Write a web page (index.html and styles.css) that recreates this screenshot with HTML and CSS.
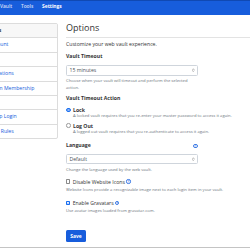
FILE: index.html
```html
<!DOCTYPE html>
<html lang="en">
<head>
<meta charset="utf-8">
<title>Options</title>
<link rel="stylesheet" href="styles.css">
</head>
<body>
<nav class="navbar">
  <a class="nav-link first">My Vault</a>
  <a class="nav-link">Tools</a>
  <a class="nav-link active">Settings</a>
</nav>
<div class="page">
  <aside class="sidebar">
    <div class="card-header">Settings</div>
    <a class="item">My Account</a>
    <a class="item active">Options</a>
    <a class="item">Organizations</a>
    <a class="item">Premium Membership</a>
    <a class="item">Billing</a>
    <a class="item">Two-step Login</a>
    <a class="item">Domain Rules</a>
  </aside>
  <main class="main">
    <div class="page-header"><h1>Options</h1></div>
    <p class="lead">Customize your web vault experience.</p>

    <div class="group g-timeout">
      <div class="label">Vault Timeout</div>
      <div class="select">
        <span>15 minutes</span>
        <svg class="chev" viewBox="0 0 6 10"><path d="M1 4 L3 2 L5 4 M1 6 L3 8 L5 6"/></svg>
      </div>
      <p class="help">Choose when your vault will timeout and perform the selected action.</p>
    </div>

    <div class="label l-action">Vault Timeout Action</div>
    <div class="radio r-lock">
      <div class="row"><span class="dot on"></span><strong>Lock</strong></div>
      <p class="desc">A locked vault requires that you re-enter your master password to access it again.</p>
    </div>
    <div class="radio r-logout">
      <div class="row"><span class="dot"></span><strong>Log Out</strong></div>
      <p class="desc">A logged out vault requires that you re-authenticate to access it again.</p>
    </div>

    <div class="group g-lang">
      <div class="label label-row"><span>Language</span><span class="q">?</span></div>
      <div class="select">
        <span>Default</span>
        <svg class="chev" viewBox="0 0 6 10"><path d="M1 4 L3 2 L5 4 M1 6 L3 8 L5 6"/></svg>
      </div>
      <p class="help">Change the language used by the web vault.</p>
    </div>

    <div class="check c-icons">
      <div class="row"><span class="box"></span><span>Disable Website Icons</span><span class="q">?</span></div>
      <p class="desc">Website Icons provide a recognizable image next to each login item in your vault.</p>
    </div>
    <div class="check c-grav">
      <div class="row"><span class="box on"><svg viewBox="0 0 10 10"><path d="M2 5.2 L4.2 7.4 L8.2 2.8"/></svg></span><span>Enable Gravatars</span><span class="q">?</span></div>
      <p class="desc">Use avatar images loaded from gravatar.com.</p>
    </div>

    <button class="btn">Save</button>
  </main>
</div>
<footer class="footer"></footer>
</body>
</html>
```

FILE: styles.css
```css
* { box-sizing: border-box; }
html, body { margin: 0; padding: 0; }
body {
  width: 250px;
  height: 250px;
  overflow: hidden;
  background: #fff;
  color: #333;
  font-family: "Open Sans", "Noto Sans", sans-serif;
  font-size: 5.15px;
}

/* navbar */
.navbar {
  display: flex;
  gap: 8.7px;
  height: 15px;
  background: #175ddc;
  border-top: 1px solid #1049b3;
  padding-top: 1.5px;
  line-height: 6px;
}
.nav-link {
  font-size: 4.9px;
  font-weight: 600;
  color: rgba(255, 255, 255, 0.8);
  white-space: nowrap;
}
.nav-link.first { margin-left: -8.5px; }
.nav-link.active { color: #fff; font-weight: 700; }

/* page */
.page {
  display: flex;
  gap: 8px;
  padding-top: 7px;
}

.sidebar {
  flex: 0 0 84.5px;
  margin-left: -26.5px;
  margin-top: 1px;
  border: 1px solid #dcdcdc;
  border-radius: 2px;
  align-self: flex-start;
  overflow: hidden;
}
.card-header {
  height: 14.4px;
  line-height: 13.4px;
  padding-left: 6px;
  background: #f7f7f7;
  border-bottom: 1px solid #dcdcdc;
  font-weight: 700;
  white-space: nowrap;
}
.item {
  display: block;
  height: 14.4px;
  line-height: 13.4px;
  padding-left: 6px;
  color: #175ddc;
  border-bottom: 1px solid #dcdcdc;
  white-space: nowrap;
}
.item:last-child { border-bottom: 0; height: 13.4px; }
.item.active { color: #333; }

.main {
  flex: 0 0 200px;
}
.page-header {
  padding-bottom: 2.5px;
  border-bottom: 1px solid #e3e3e3;
}
.page-header h1 {
  margin: 0;
  font-size: 9px;
  line-height: 12px;
  font-weight: 400;
  color: #333;
}
.lead {
  margin: 3px 0 0;
  line-height: 7px;
  white-space: nowrap;
}

.group { width: 132px; }
.g-timeout { margin-top: 5.8px; }
.label {
  font-weight: 700;
  line-height: 7.7px;
  margin-bottom: 4px;
}
.label-row {
  display: flex;
  justify-content: space-between;
  align-items: center;
}
.select {
  display: flex;
  align-items: center;
  justify-content: space-between;
  height: 10.5px;
  border: 1px solid #cfd5dc;
  border-radius: 1.5px;
  padding: 0 2.5px 0 2.5px;
  color: #495057;
}
.chev {
  width: 2.6px;
  height: 4.4px;
}
.chev path { fill: none; stroke: #444; stroke-width: 1.2; }
.help {
  margin: 1.1px 0 0;
  font-size: 4.2px;
  line-height: 7px;
  color: #6c757d;
}

.l-action { margin-top: 4.25px; margin-bottom: 0; }

.row {
  display: flex;
  align-items: center;
  line-height: 6px;
  white-space: nowrap;
}
.desc {
  margin: 0.6px 0 0 7px;
  font-size: 4.2px;
  line-height: 6px;
  color: #6c757d;
  white-space: nowrap;
}
.r-lock { margin-top: 4.25px; }
.r-logout { margin-top: 3.3px; }

.dot {
  width: 4.5px;
  height: 4.5px;
  border-radius: 50%;
  border: 0.6px solid #9a9a9a;
  background: #fff;
  margin-right: 2.5px;
  flex: none;
}
.dot.on {
  border: 1.4px solid #1b6ff0;
  background: #fff;
  box-shadow: inset 0 0 0 0.4px #1b6ff0;
}

.g-lang { margin-top: 7px; }

.check .desc { margin: 2.7px 0 0 0; }
.c-icons { margin-top: 6px; }
.c-grav { margin-top: 6.4px; }
.box {
  width: 4.3px;
  height: 4.3px;
  border: 0.6px solid #8a8a8a;
  border-radius: 0.8px;
  background: #fff;
  margin-right: 2.4px;
  flex: none;
  display: flex;
}
.box.on {
  border-color: #1b6ff0;
  background: #e9f1fe;
}
.box svg { width: 100%; height: 100%; }
.box svg path { fill: none; stroke: #1b6ff0; stroke-width: 1.6; }

.q {
  display: inline-flex;
  align-items: center;
  justify-content: center;
  width: 4.3px;
  height: 4.3px;
  border: 0.5px solid #3c7be6;
  border-radius: 50%;
  color: #3c7be6;
  font-size: 3.4px;
  line-height: 1;
  font-weight: 700;
  margin-left: 1.5px;
  flex: none;
}
.label-row .q { margin-right: 0.5px; }

.btn {
  display: block;
  margin-top: 15.6px;
  width: 20px;
  height: 12px;
  padding: 0;
  border: 0;
  border-radius: 1.5px;
  background: #175ddc;
  color: #fff;
  font-family: "Open Sans", "Noto Sans", sans-serif;
  font-size: 4.9px;
  font-weight: 700;
}

.footer {
  margin-top: 5px;
  border-top: 1px solid #c4c4c4;
  height: 10px;
}
```
